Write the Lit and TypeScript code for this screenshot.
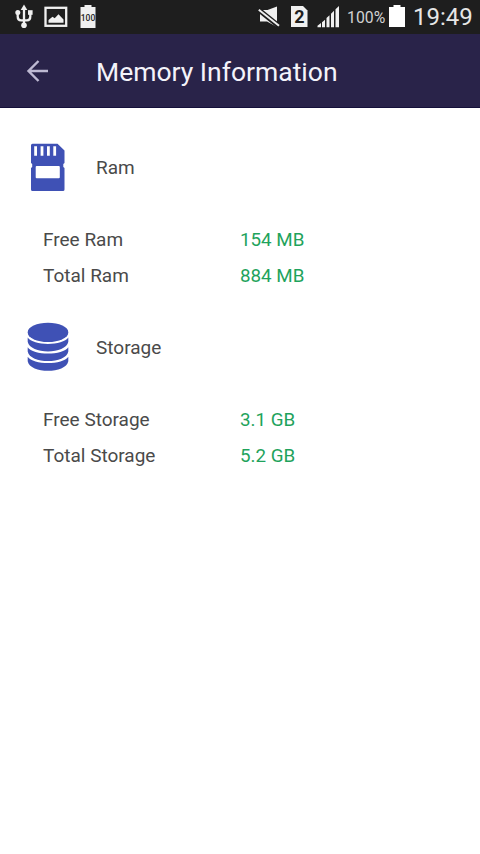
import { LitElement, css, html, svg } from 'lit'
import { customElement, property } from 'lit/decorators.js'

const sections = [
  {
    title: 'Ram',
    icon: 'card',
    rows: [
      ['Free Ram', '154 MB'],
      ['Total Ram', '884 MB'],
    ],
  },
  {
    title: 'Storage',
    icon: 'disks',
    rows: [
      ['Free Storage', '3.1 GB'],
      ['Total Storage', '5.2 GB'],
    ],
  },
]

const icons: Record<string, unknown> = {
  card: svg`
    <path fill-rule="evenodd" d="M8.5 5.7H33.5L40.5 12.5V25L39.3 26V29L40.5 30V51.5Q40.5 53 39 53H8.5Q7 53 7 51.5V30L8.2 29V26L7 25V7.2Q7 5.7 8.5 5.7Z
      M10.2 8.3V17.7H13V8.3Z M16.6 8.3V17.7H19.4V8.3Z M23 8.3V17.7H25.8V8.3Z M29.3 8.3V17.7H32.1V8.3Z
      M12.7 28Q11.7 28 11.7 29V39.2Q11.7 40.2 12.7 40.2H34.8Q35.8 40.2 35.8 39.2V29Q35.8 28 34.8 28Z" />
  `,
  disks: svg`
    <ellipse cx="24" cy="14.4" rx="20.3" ry="9.6" />
    <path d="M3.7 19.6C9 28 39 28 44.3 19.6V23.8C42 36.6 6 36.6 3.7 23.8Z" />
    <path d="M3.7 29.2C9 37.6 39 37.6 44.3 29.2V33.4C42 46.2 6 46.2 3.7 33.4Z" />
    <path d="M3.7 38.8C9 47.2 39 47.2 44.3 38.8V43.2C42 56 6 56 3.7 43.2Z" />
  `,
}

@customElement('status-bar')
export class StatusBar extends LitElement {
  render() {
    return html`
      <svg width="18" height="34" viewBox="0 0 18 34">
        <path d="M9 8V25M2.7 13V16.5Q2.7 20.3 6 20.3H12Q15.3 20.3 15.3 16.5V13" fill="none" stroke="#f0f0f0" stroke-width="2.3" />
        <path d="M9 4.5L12.3 10H5.7Z" />
        <circle cx="2.8" cy="12.5" r="2.5" />
        <rect x="13" y="10.2" width="4.6" height="4.6" />
        <circle cx="9" cy="25.2" r="2.8" />
      </svg>
      <svg class="picture" width="24" height="34" viewBox="0 0 24 34">
        <rect x="1.5" y="7.8" width="20.7" height="18" fill="none" stroke="#f0f0f0" stroke-width="2.3" />
        <path d="M4.5 22.8V20L8.5 16.8L10.7 18.3L14.5 14.3L19.5 19.5V22.8Z" />
      </svg>
      <svg class="charge" width="16" height="34" viewBox="0 0 16 34">
        <path d="M4.5 5H11.5V7H15.5V28H0.5V7H4.5Z" />
        <text x="8" y="20.8" text-anchor="middle">100</text>
      </svg>
      <span class="spacer"></span>
      <svg width="22" height="34" viewBox="0 0 22 34">
        <path d="M2 10H9.5L19 6.5V27L9 21.5H2Z" />
        <path d="M-1 8.5L22 27" fill="none" stroke="#1e1e1e" stroke-width="5" />
        <path d="M0.8 9.8L21 25.8" fill="none" stroke="#f0f0f0" stroke-width="2" />
      </svg>
      <svg class="sim" width="18" height="34" viewBox="0 0 18 34">
        <path d="M1 6H13L17.5 10.5V27H1Z" />
        <text x="9.3" y="23" text-anchor="middle">2</text>
      </svg>
      <svg class="signal" width="22" height="34" viewBox="0 0 22 34">
        <path d="M0.5 27.3V25.7L4 23V27.3ZM5 27.3V22.3L8 19.8V27.3ZM9.5 27.3V18.1L12.5 15.3V27.3ZM14 27.3V13.7L17 10.8V27.3ZM18.5 27.3V9.2L22 6V27.3Z" />
      </svg>
      <span class="percent">100%</span>
      <svg class="battery" width="16" height="34" viewBox="0 0 16 34">
        <path d="M4.5 5H11.5V7H16V27H0V7H4.5Z" />
      </svg>
      <span class="clock">19:49</span>
    `
  }

  static styles = css`
    :host {
      display: flex;
      align-items: center;
      box-sizing: border-box;
      height: 34px;
      padding: 0 8px 0 15px;
      background: #1e1e1e;
      color: #e6e6e6;
    }
    svg {
      flex: none;
      fill: #f0f0f0;
    }
    text {
      fill: #1e1e1e;
      font-weight: 700;
    }
    .picture {
      margin-left: 11px;
    }
    .charge {
      margin-left: 12px;
    }
    .charge text {
      font-size: 8.5px;
      font-weight: 500;
    }
    .spacer {
      flex: 1;
    }
    .sim {
      margin-left: 10px;
    }
    .sim text {
      font-size: 18px;
    }
    .signal {
      margin-left: 9px;
    }
    .percent {
      width: 42px;
      margin-left: 8px;
      padding-top: 1px;
      box-sizing: border-box;
      font-size: 15.8px;
      color: #d2d2d2;
    }
    .battery {
      fill: #fff;
    }
    .clock {
      width: 59px;
      margin-left: 8px;
      font-size: 24px;
    }
  `
}

@customElement('info-section')
export class InfoSection extends LitElement {
  @property() heading = ''
  @property() icon = ''
  @property({ attribute: false }) rows: string[][] = []

  render() {
    return html`
      <div class="header">
        <svg width="48" height="60" viewBox="0 0 48 60">${icons[this.icon]}</svg>
        <span>${this.heading}</span>
      </div>
      ${this.rows.map(
        ([label, value]) => html`
          <div class="row">
            <span>${label}</span>
            <span class="value">${value}</span>
          </div>
        `
      )}
    `
  }

  static styles = css`
    :host {
      display: block;
      padding-top: 24px;
      font-size: 19px;
      color: #4a4a4a;
    }
    .header {
      display: flex;
      align-items: center;
      gap: 24px;
      height: 60px;
      padding-left: 24px;
      margin-bottom: 24px;
    }
    .header span {
      padding-bottom: 2px;
    }
    svg {
      fill: #3f51b5;
    }
    .row {
      display: grid;
      grid-template-columns: 197px 1fr;
      align-items: baseline;
      height: 36px;
      line-height: 36px;
      padding-left: 43px;
    }
    .value {
      font-size: 18.8px;
      color: #1fa35c;
    }
  `
}

@customElement('app-root')
export class AppRoot extends LitElement {
  render() {
    return html`
      <status-bar></status-bar>
      <header>
        <svg width="24" height="24" viewBox="0 0 24 24">
          <path d="M23 12H4M13.5 2L3.5 12L13.5 22" />
        </svg>
        <h1>Memory Information</h1>
      </header>
      <main>
        ${sections.map(
          (s) => html`<info-section .heading=${s.title} .icon=${s.icon} .rows=${s.rows}></info-section>`
        )}
      </main>
    `
  }

  static styles = css`
    :host {
      display: block;
      min-height: 854px;
      background: #fff;
      font-family: Roboto, 'Liberation Sans', sans-serif;
    }
    header {
      display: flex;
      align-items: center;
      gap: 47px;
      box-sizing: border-box;
      height: 74px;
      padding-left: 25px;
      background: #292349;
      border-bottom: 1px solid #15103a;
    }
    header svg {
      fill: none;
      stroke: #bdb9d2;
      stroke-width: 2.4;
    }
    h1 {
      margin: 0;
      padding-top: 2px;
      font-size: 26.5px;
      font-weight: 400;
      color: #f4f3fa;
    }
    main {
      padding-top: 6px;
    }
  `
}
